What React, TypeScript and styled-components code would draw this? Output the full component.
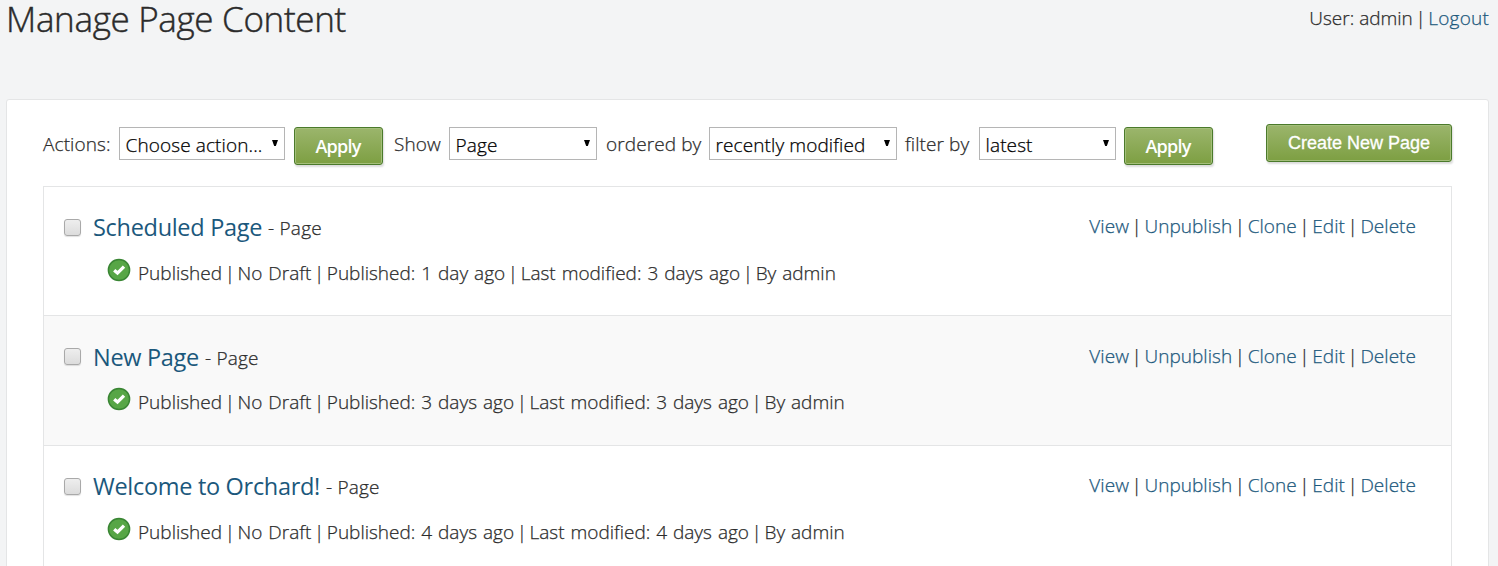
import React from 'react';
import styled, { createGlobalStyle } from 'styled-components';

const Global = createGlobalStyle`
  * { box-sizing: border-box; }
  html { overflow: hidden; }
  body {
    margin: 0;
    height: 566px;
    overflow: hidden;
    background: #f3f4f5;
    color: #2b2b2b;
    font-family: "Open Sans", "Noto Sans", sans-serif;
    font-weight: 300;
    font-size: 19px;
    line-height: 26px;
    -webkit-text-stroke: 0.25px currentColor;
  }
`;

const Screen = styled.div`
  height: 566px;
  overflow: hidden;
  padding: 0 9px 0 6px;
`;

const Header = styled.header`
  display: flex;
  justify-content: space-between;
  height: 99px;
`;

const Title = styled.h1`
  margin: 0;
  font-size: 35px;
  line-height: 38px;
  font-weight: 300;
  letter-spacing: -0.33px;
  white-space: nowrap;
  -webkit-text-stroke-width: 0.45px;
`;

const Account = styled.div`
  padding-top: 5px;
  white-space: nowrap;
`;

const Link = styled.a`
  color: #1b587c;
  text-decoration: none;
`;

const LogoutLink = styled(Link)`
  letter-spacing: 0.2px;
`;

const Divider = styled.span`
  display: inline-block;
  width: 15.5px;
  text-align: center;
  letter-spacing: 0;
  &::before { content: "|"; }
`;

const Panel = styled.main`
  height: 600px;
  padding: 24px 36px 0;
  background: #fff;
  border: 1px solid #e4e5e6;
  border-radius: 3px;
`;

const Toolbar = styled.div`
  display: flex;
  align-items: flex-start;
  height: 62px;
  white-space: nowrap;
`;

const Label = styled.label<{ $width: number }>`
  flex: none;
  width: ${(p) => p.$width}px;
  padding-top: 7px;
  letter-spacing: 0.1px;
`;

const Select = styled.div<{ $width: number; $gap: number }>`
  display: flex;
  flex: none;
  justify-content: space-between;
  width: ${(p) => p.$width}px;
  height: 33px;
  margin: 3px ${(p) => p.$gap}px 0 0;
  padding: 4px 6px 0 5.6px;
  border: 1px solid #b5b5b5;
  background: #fff;
  color: #000;
  letter-spacing: 0.1px;
`;

const Arrow = styled.svg`
  flex: none;
  width: 6px;
  height: 6px;
  margin-top: 8px;
`;

const Button = styled.button<{ $width: number; $gap?: number }>`
  flex: none;
  width: ${(p) => p.$width}px;
  height: 38px;
  margin: 3px ${(p) => p.$gap ?? 0}px 0 0;
  padding: 0 1px 0 0;
  border: 1px solid #4b7a2b;
  border-radius: 3px;
  background: linear-gradient(#9bb56c, #7d9f42);
  box-shadow: inset 0 0 0 1px #a4bf7b, 1px 2px 2px rgba(0, 0, 0, 0.14);
  color: #fff;
  font: 600 18px/34px "Open Sans", sans-serif;
  letter-spacing: -0.8px;
  -webkit-text-stroke-width: 0;
`;

const CreateButton = styled(Button)`
  margin: 0 0 0 auto;
  padding: 0;
  font: 400 18px/34px "Liberation Sans", sans-serif;
  letter-spacing: 0;
  -webkit-text-stroke-width: 0.3px;
`;

const List = styled.ul`
  list-style: none;
  margin: 0;
  padding: 0;
  border: 1px solid #e4e5e6;
`;

const Row = styled.li`
  height: 129.3px;
  padding: 26px 35px 0 20px;
  border-bottom: 1px solid #e4e5e6;
  &:nth-child(even) { background: #f9f9f9; }
`;

const Summary = styled.div`
  display: flex;
  align-items: flex-start;
  height: 44px;
  white-space: nowrap;
`;

const Check = styled.span`
  flex: none;
  width: 17px;
  height: 17px;
  margin: 6px 12px 0 0;
  border: 1px solid #a9a9a9;
  border-radius: 3px;
  background: linear-gradient(#eee, #dcdcdc);
  box-shadow: 0 1px 1px rgba(0, 0, 0, 0.12);
`;

const PageLink = styled(Link)`
  margin-top: 0.3px;
  font-size: 23.5px;
  line-height: 28px;
  font-weight: 400;
  letter-spacing: -0.3px;
  -webkit-text-stroke-width: 0;
`;

const Kind = styled.span`
  margin-left: 6px;
  padding-top: 2.3px;
  letter-spacing: 0.2px;
`;

const RowActions = styled.div`
  margin: 0.3px 0 0 auto;
  letter-spacing: 0.04px;
`;

const Status = styled.div`
  display: flex;
  padding-left: 43px;
  white-space: nowrap;
`;

const StatusText = styled.span`
  padding-top: 3px;
  word-spacing: 1px;
`;

const Badge = styled.svg`
  flex: none;
  width: 24px;
  height: 24px;
  margin: 1px 7px 0 0;
`;

const DownArrow = () => (
  <Arrow viewBox="0 0 6 6"><path d="M0 0H6L3.8 6H2.2Z" fill="#000" /></Arrow>
);

const Published = () => (
  <Badge viewBox="0 0 24 24">
    <circle cx="12" cy="12" r="10.6" fill="#57a646" stroke="#398533" strokeWidth="1.5" />
    <path d="M7.2 12.2L10.5 15.1L17 8.6" fill="none" stroke="#fff" strokeWidth="3.3" />
  </Badge>
);

const pages = [
  { name: 'Scheduled Page', published: '1 day ago', modified: '3 days ago' },
  { name: 'New Page', published: '3 days ago', modified: '3 days ago' },
  { name: 'Welcome to Orchard!', published: '4 days ago', modified: '4 days ago' },
];

export default function App() {
  return (
    <>
      <Global />
      <Screen>
        <Header>
          <Title>Manage Page Content</Title>
          <Account>User: admin<Divider /><LogoutLink>Logout</LogoutLink></Account>
        </Header>
        <Panel>
          <Toolbar>
            <Label $width={76}>Actions:</Label>
            <Select $width={166} $gap={9}>Choose action...<DownArrow /></Select>
            <Button $width={89} $gap={11}>Apply</Button>
            <Label $width={55}>Show</Label>
            <Select $width={148} $gap={9}>Page<DownArrow /></Select>
            <Label $width={103}>ordered by</Label>
            <Select $width={188} $gap={8}>recently modified<DownArrow /></Select>
            <Label $width={74}>filter by</Label>
            <Select $width={137} $gap={8}>latest<DownArrow /></Select>
            <Button $width={89}>Apply</Button>
            <CreateButton $width={186}>Create New Page</CreateButton>
          </Toolbar>
          <List>
            {pages.map((page) => (
              <Row key={page.name}>
                <Summary>
                  <Check />
                  <PageLink>{page.name}</PageLink>
                  <Kind>- Page</Kind>
                  <RowActions>
                    <Link>View</Link><Divider />
                    <Link>Unpublish</Link><Divider />
                    <Link>Clone</Link><Divider />
                    <Link>Edit</Link><Divider />
                    <Link>Delete</Link>
                  </RowActions>
                </Summary>
                <Status>
                  <Published />
                  <StatusText>
                    Published<Divider />
                    No Draft<Divider />
                    Published: {page.published}<Divider />
                    Last modified: {page.modified}<Divider />
                    By admin
                  </StatusText>
                </Status>
              </Row>
            ))}
          </List>
        </Panel>
      </Screen>
    </>
  );
}
